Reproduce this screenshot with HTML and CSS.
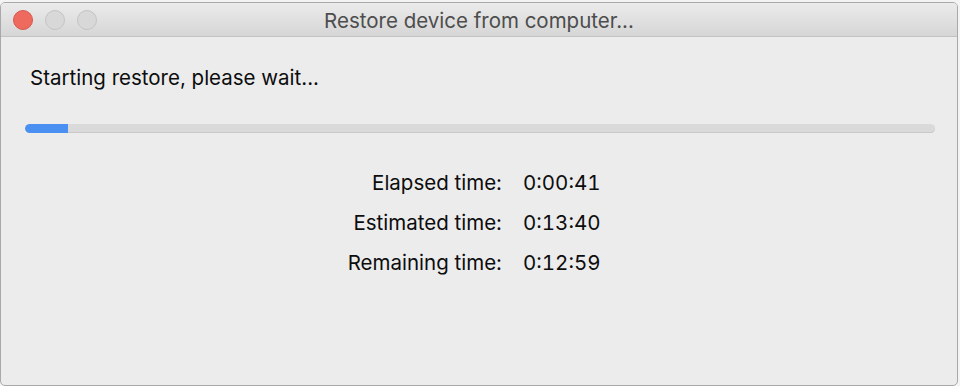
FILE: index.html
```html
<!DOCTYPE html>
<html>
<head>
<meta charset="utf-8">
<link rel="stylesheet" href="styles.css">
</head>
<body>
<div class="window">
  <div class="titlebar">
    <div class="lights">
      <span class="light close"></span>
      <span class="light off"></span>
      <span class="light off"></span>
    </div>
    <div class="title">Restore device from computer...</div>
  </div>
  <div class="content">
    <div class="status">Starting restore, please wait...</div>
    <div class="progress"><div class="fill" style="width:43px"></div></div>
    <div class="times">
      <div class="label">Elapsed time:</div><div class="value">0:00:41</div>
      <div class="label">Estimated time:</div><div class="value">0:13:40</div>
      <div class="label">Remaining time:</div><div class="value">0:12:59</div>
    </div>
  </div>
</div>
</body>
</html>
```

FILE: styles.css
```css
html, body {
  margin: 0;
  padding: 0;
}
body {
  width: 960px;
  height: 386px;
  background: #f4f4f4;
  font-family: Inter, "Liberation Sans", Arial, sans-serif;
  overflow: hidden;
}
.window {
  margin: 2px 2px 0 0;
  height: 382px;
  border: 1px solid #a9a9a9;
  border-radius: 5px;
  background: #ececec;
  overflow: hidden;
  display: flex;
  flex-direction: column;
}
.titlebar {
  height: 33px;
  flex: none;
  background: linear-gradient(#ebebeb, #d6d6d6);
  border-bottom: 1px solid #c2c2c2;
  position: relative;
  display: flex;
  align-items: center;
}
.lights {
  display: flex;
  gap: 12px;
  padding-left: 12px;
}
.light {
  width: 20px;
  height: 20px;
  border-radius: 50%;
  box-sizing: border-box;
}
.close {
  background: #ee6a5e;
  border: 1px solid #d8574c;
}
.off {
  background: #d8d8d8;
  border: 1px solid #c4c4c4;
}
.title {
  position: absolute;
  left: 0;
  right: 0;
  top: 5px;
  text-align: center;
  font-size: 20.5px;
  color: #4d4d4d;
}
.content {
  flex: 1;
  padding: 30px 22px 0 24px;
}
.status {
  font-size: 20.5px;
  color: #0d0d0d;
  padding-left: 5px;
  line-height: 22px;
}
.progress {
  margin-top: 35px;
  height: 9px;
  border-radius: 5px;
  background: #dadada;
  box-shadow: inset 0 -1px 0 #c9c9c9;
  overflow: hidden;
}
.fill {
  height: 100%;
  background: #4a90f2;
  border-radius: 5px 0 0 5px;
}
.times {
  display: grid;
  grid-template-columns: 477px auto;
  column-gap: 21px;
  row-gap: 18px;
  margin-top: 39px;
  font-size: 20.5px;
  color: #0d0d0d;
  line-height: 22px;
}
.label {
  text-align: right;
}
.value {
  font-variant-numeric: tabular-nums;
}
```
